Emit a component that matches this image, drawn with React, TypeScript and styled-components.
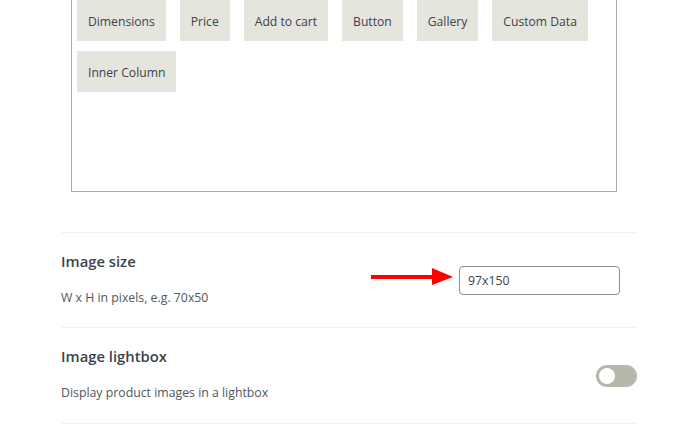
import React from 'react'
import styled, { createGlobalStyle } from 'styled-components'

const GlobalStyle = createGlobalStyle`
  body {
    margin: 0;
    background: #fff;
    font-family: 'Open Sans', 'Noto Sans', sans-serif;
    color: #3c434a;
    overflow: hidden;
  }
`

const Page = styled.div`
  width: 576px;
  margin: -40px 0 0 61px;
`

const ElementsBox = styled.div`
  margin-left: 10px;
  width: 546px;
  height: 232px;
  border: 1px solid #a7aaad;
  padding: 39px 0 0 5px;
  display: flex;
  flex-wrap: wrap;
  align-content: flex-start;
  box-sizing: border-box;
  margin-bottom: 40px;
`

const Chip = styled.span`
  height: 41px;
  display: flex;
  align-items: center;
  padding: 1px 11px 0;
  box-sizing: border-box;
  margin: 0 14px 10px 0;
  background: #e5e5dd;
  font-size: 12.15px;
  color: #3c434a;
`

const Row = styled.div`
  display: flex;
  align-items: center;
  justify-content: space-between;
  height: 95px;
  box-sizing: border-box;
  border-top: 1px solid #f0f0f1;
  &:last-child {
    height: 97px;
    border-bottom: 1px solid #f0f0f1;
  }
`

const Info = styled.div`
  display: flex;
  flex-direction: column;
  gap: 19px;
  padding-bottom: 4px;
`

const Title = styled.div`
  font-size: 14.8px;
  font-weight: 600;
  color: #3c434a;
  line-height: 20px;
`

const Desc = styled.div`
  font-size: 12.3px;
  color: #50575e;
  line-height: 16px;
`

const InputWrap = styled.div`
  position: relative;
  margin-right: 17px;
`

const TextInput = styled.input`
  width: 161px;
  height: 29px;
  box-sizing: border-box;
  border: 1px solid #8c8f94;
  border-radius: 4px;
  padding: 0 8px;
  font-family: 'Open Sans', 'Noto Sans', sans-serif;
  font-size: 12.3px;
  color: #3c434a;
  outline: none;
`

const Arrow = styled.svg`
  position: absolute;
  left: -88px;
  top: 1px;
`

const Toggle = styled.span<{ on?: boolean }>`
  width: 41px;
  height: 22px;
  border-radius: 11px;
  background: ${({ on }) => (on ? '#2271b1' : '#b6b6ab')};
  display: flex;
  align-items: center;
  padding: 0 3px;
  box-sizing: border-box;
  justify-content: ${({ on }) => (on ? 'flex-end' : 'flex-start')};
  &::after {
    content: '';
    width: 16px;
    height: 16px;
    border-radius: 50%;
    background: #fff;
  }
`

const chips = ['Dimensions', 'Price', 'Add to cart', 'Button', 'Gallery', 'Custom Data', 'Inner Column']

export default function App() {
  return (
    <>
      <GlobalStyle />
      <Page>
        <ElementsBox>
          {chips.map((c) => (
            <Chip key={c}>{c}</Chip>
          ))}
        </ElementsBox>
        <div>
          <Row>
            <Info>
              <Title>Image size</Title>
              <Desc>W x H in pixels, e.g. 70x50</Desc>
            </Info>
            <InputWrap>
              <Arrow width="84" height="20" viewBox="0 0 84 20">
                <rect x="0" y="8" width="64" height="4" fill="#f00" />
                <polygon points="61,1 82,10 61,18" fill="#f00" />
              </Arrow>
              <TextInput defaultValue="97x150" />
            </InputWrap>
          </Row>
          <Row>
            <Info>
              <Title>Image lightbox</Title>
              <Desc>Display product images in a lightbox</Desc>
            </Info>
            <Toggle />
          </Row>
        </div>
      </Page>
    </>
  )
}
